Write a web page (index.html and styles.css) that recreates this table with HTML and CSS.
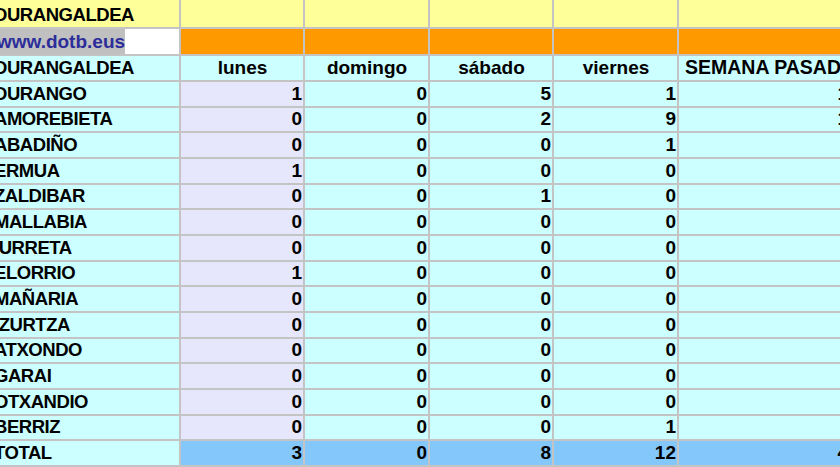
FILE: index.html
```html
<!DOCTYPE html>
<html lang="es">
<head>
<meta charset="utf-8">
<title>DURANGALDEA</title>
<link rel="stylesheet" href="styles.css">
</head>
<body>
<table class="sheet">
  <colgroup>
    <col class="c-name"><col class="c-a"><col class="c-b"><col class="c-a"><col class="c-b"><col class="c-last">
  </colgroup>
  <tr class="r-title">
    <td class="txt">DURANGALDEA</td><td></td><td></td><td></td><td></td><td></td>
  </tr>
  <tr class="r-link">
    <td class="link-cell"><span class="link">www.dotb.eus</span></td><td class="orange"></td><td class="orange"></td><td class="orange"></td><td class="orange"></td><td class="orange"></td>
  </tr>
  <tr class="r-head">
    <td class="txt">DURANGALDEA</td><td class="hd">lunes</td><td class="hd">domingo</td><td class="hd">sábado</td><td class="hd">viernes</td><td class="hd hd-last">SEMANA PASADA</td>
  </tr>
  <tr class="r-data"><td class="txt">DURANGO</td><td class="num lun">1</td><td class="num">0</td><td class="num">5</td><td class="num">1</td><td class="num">1</td></tr>
  <tr class="r-data"><td class="txt">AMOREBIETA</td><td class="num lun">0</td><td class="num">0</td><td class="num">2</td><td class="num">9</td><td class="num">1</td></tr>
  <tr class="r-data"><td class="txt">ABADIÑO</td><td class="num lun">0</td><td class="num">0</td><td class="num">0</td><td class="num">1</td><td class="num"></td></tr>
  <tr class="r-data"><td class="txt">ERMUA</td><td class="num lun">1</td><td class="num">0</td><td class="num">0</td><td class="num">0</td><td class="num"></td></tr>
  <tr class="r-data"><td class="txt">ZALDIBAR</td><td class="num lun">0</td><td class="num">0</td><td class="num">1</td><td class="num">0</td><td class="num"></td></tr>
  <tr class="r-data"><td class="txt">MALLABIA</td><td class="num lun">0</td><td class="num">0</td><td class="num">0</td><td class="num">0</td><td class="num"></td></tr>
  <tr class="r-data"><td class="txt">IURRETA</td><td class="num lun">0</td><td class="num">0</td><td class="num">0</td><td class="num">0</td><td class="num"></td></tr>
  <tr class="r-data"><td class="txt">ELORRIO</td><td class="num lun">1</td><td class="num">0</td><td class="num">0</td><td class="num">0</td><td class="num"></td></tr>
  <tr class="r-data"><td class="txt">MAÑARIA</td><td class="num lun">0</td><td class="num">0</td><td class="num">0</td><td class="num">0</td><td class="num"></td></tr>
  <tr class="r-data"><td class="txt">IZURTZA</td><td class="num lun">0</td><td class="num">0</td><td class="num">0</td><td class="num">0</td><td class="num"></td></tr>
  <tr class="r-data"><td class="txt">ATXONDO</td><td class="num lun">0</td><td class="num">0</td><td class="num">0</td><td class="num">0</td><td class="num"></td></tr>
  <tr class="r-data"><td class="txt">GARAI</td><td class="num lun">0</td><td class="num">0</td><td class="num">0</td><td class="num">0</td><td class="num"></td></tr>
  <tr class="r-data"><td class="txt">OTXANDIO</td><td class="num lun">0</td><td class="num">0</td><td class="num">0</td><td class="num">0</td><td class="num"></td></tr>
  <tr class="r-data"><td class="txt">BERRIZ</td><td class="num lun">0</td><td class="num">0</td><td class="num">0</td><td class="num">1</td><td class="num"></td></tr>
  <tr class="r-data r-total"><td class="txt">TOTAL</td><td class="num tot">3</td><td class="num tot">0</td><td class="num tot">8</td><td class="num tot">12</td><td class="num tot">4</td></tr>
</table>
</body>
</html>
```
FILE: styles.css
```css
html, body {
  margin: 0;
  padding: 0;
  overflow: hidden;
  background: #ffffff;
}

.sheet {
  table-layout: fixed;
  width: 858px;
  margin: -2px 0 0 -7px;
  border-collapse: separate;
  border-spacing: 2px;
  background: #c4c4c4;
  font-family: "Liberation Sans", Arial, sans-serif;
  font-weight: bold;
  font-size: 19px;
  line-height: 19px;
  color: #000;
}

.c-name { width: 184px; }
.c-a { width: 122px; }
.c-b { width: 123px; }
.c-last { width: 170px; }

.sheet td {
  box-sizing: border-box;
  padding: 0 1px 3px 2px;
  vertical-align: bottom;
  white-space: nowrap;
  overflow: hidden;
}

.sheet td.txt {
  font-size: 18.5px;
  letter-spacing: -0.45px;
  padding-left: 1px;
  text-indent: -2px;
}

.r-title td {
  height: 27px;
  background: #ffff99;
}

.r-link td {
  height: 25px;
}

.orange {
  background: #ff9900;
}

.sheet td.link-cell {
  background: #ffffff;
  padding: 0;
}

.link {
  display: flex;
  align-items: flex-end;
  box-sizing: border-box;
  width: fit-content;
  height: 25px;
  padding: 0 0 3px 2px;
  background: #c0c0c0;
  color: #2d2d9a;
}

.r-head td {
  height: 24px;
  background: #ccffff;
}

.hd {
  text-align: center;
}

.sheet td.hd-last {
  text-align: left;
  padding-left: 6px;
  font-size: 19.5px;
}

.r-data td {
  height: 23.67px;
  background: #ccffff;
}

.num {
  text-align: right;
}

.r-data td.lun {
  background: #e6e6fc;
}

.r-data td.tot {
  background: #84c8fb;
}
```
